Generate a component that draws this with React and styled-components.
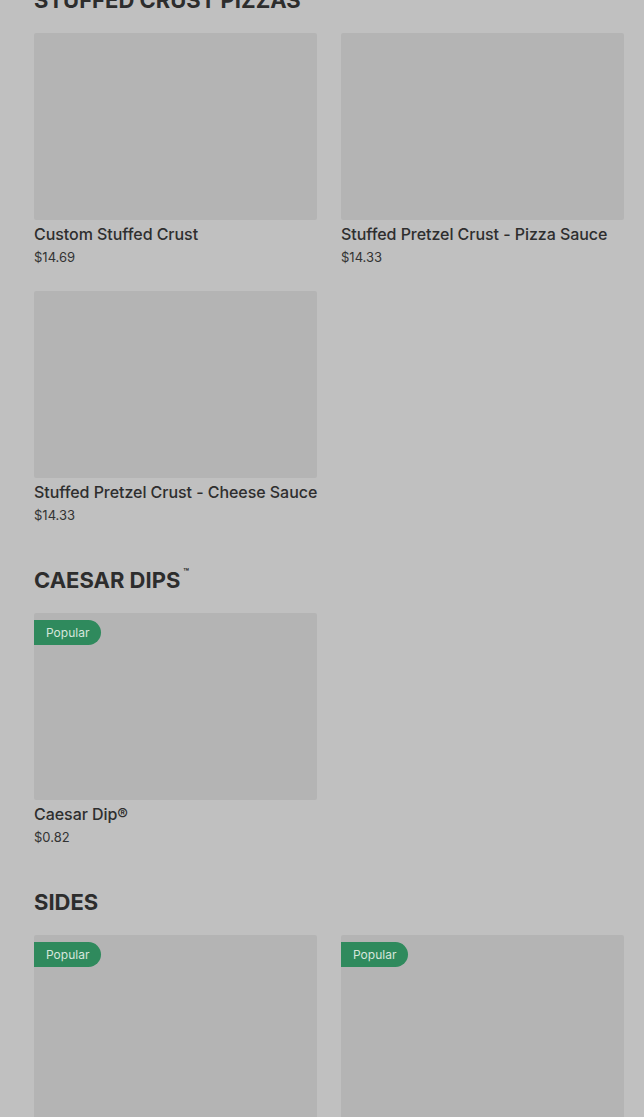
import React from 'react';
import styled, { createGlobalStyle } from 'styled-components';

const GlobalStyle = createGlobalStyle`
  html, body {
    margin: 0;
    padding: 0;
    background: #c0c0c0;
    overflow: hidden;
  }
  body {
    font-family: Inter, "Noto Sans", sans-serif;
    color: #2e2e2e;
  }
`;

const Page = styled.main`
  margin-top: -14px;
  padding: 0 20px 0 34px;
`;

const Section = styled.section`
  margin-bottom: 42px;
`;

const Heading = styled.h2`
  margin: 0 0 19px;
  font-family: Inter, "Liberation Sans", sans-serif;
  font-size: 22px;
  line-height: 28px;
  font-weight: 700;
  letter-spacing: 0;
  text-transform: uppercase;
  color: #2d2d2d;

  sup {
    font-size: 9px;
    vertical-align: top;
    line-height: 12px;
    margin-left: 3px;
  }
`;

const Grid = styled.div`
  display: grid;
  grid-template-columns: repeat(2, 283px);
  column-gap: 24px;
  row-gap: 25px;
`;

const Card = styled.article`
  display: flex;
  flex-direction: column;
`;

const Thumb = styled.div`
  position: relative;
  height: 187px;
  background: #b4b4b4;
  border-radius: 2px;
`;

const Badge = styled.span`
  position: absolute;
  top: 7px;
  left: 0;
  height: 25px;
  padding: 0 12px;
  display: flex;
  align-items: center;
  background: #2f8a5d;
  color: #d6e6dc;
  font-size: 12px;
  border-radius: 0 13px 13px 0;
`;

const Title = styled.h3`
  margin: 3px 0 0;
  font-size: 16px;
  line-height: 22px;
  font-weight: 500;
  letter-spacing: -0.05px;
  color: #2e2e2e;
  white-space: nowrap;
`;

const Price = styled.div`
  margin-top: 3px;
  font-size: 13px;
  line-height: 18px;
  color: #333;
`;

const sections = [
  {
    name: 'Stuffed Crust Pizzas',
    items: [
      { title: 'Custom Stuffed Crust', price: '$14.69' },
      { title: 'Stuffed Pretzel Crust - Pizza Sauce', price: '$14.33' },
      { title: 'Stuffed Pretzel Crust - Cheese Sauce', price: '$14.33' },
    ],
  },
  {
    name: 'Caesar Dips',
    mark: '™',
    items: [{ title: 'Caesar Dip®', price: '$0.82', popular: true }],
  },
  {
    name: 'Sides',
    items: [
      { title: 'Crazy Bread®', price: '$3.99', popular: true },
      { title: 'Italian Cheese Bread', price: '$5.99', popular: true },
    ],
  },
];

const ItemCard = ({ title, price, popular }) => (
  <Card>
    <Thumb>{popular && <Badge>Popular</Badge>}</Thumb>
    <Title>{title}</Title>
    <Price>{price}</Price>
  </Card>
);

export default function App() {
  return (
    <>
      <GlobalStyle />
      <Page>
        {sections.map((s) => (
          <Section key={s.name}>
            <Heading>
              {s.name}
              {s.mark && <sup>{s.mark}</sup>}
            </Heading>
            <Grid>
              {s.items.map((it) => (
                <ItemCard key={it.title} {...it} />
              ))}
            </Grid>
          </Section>
        ))}
      </Page>
    </>
  );
}
